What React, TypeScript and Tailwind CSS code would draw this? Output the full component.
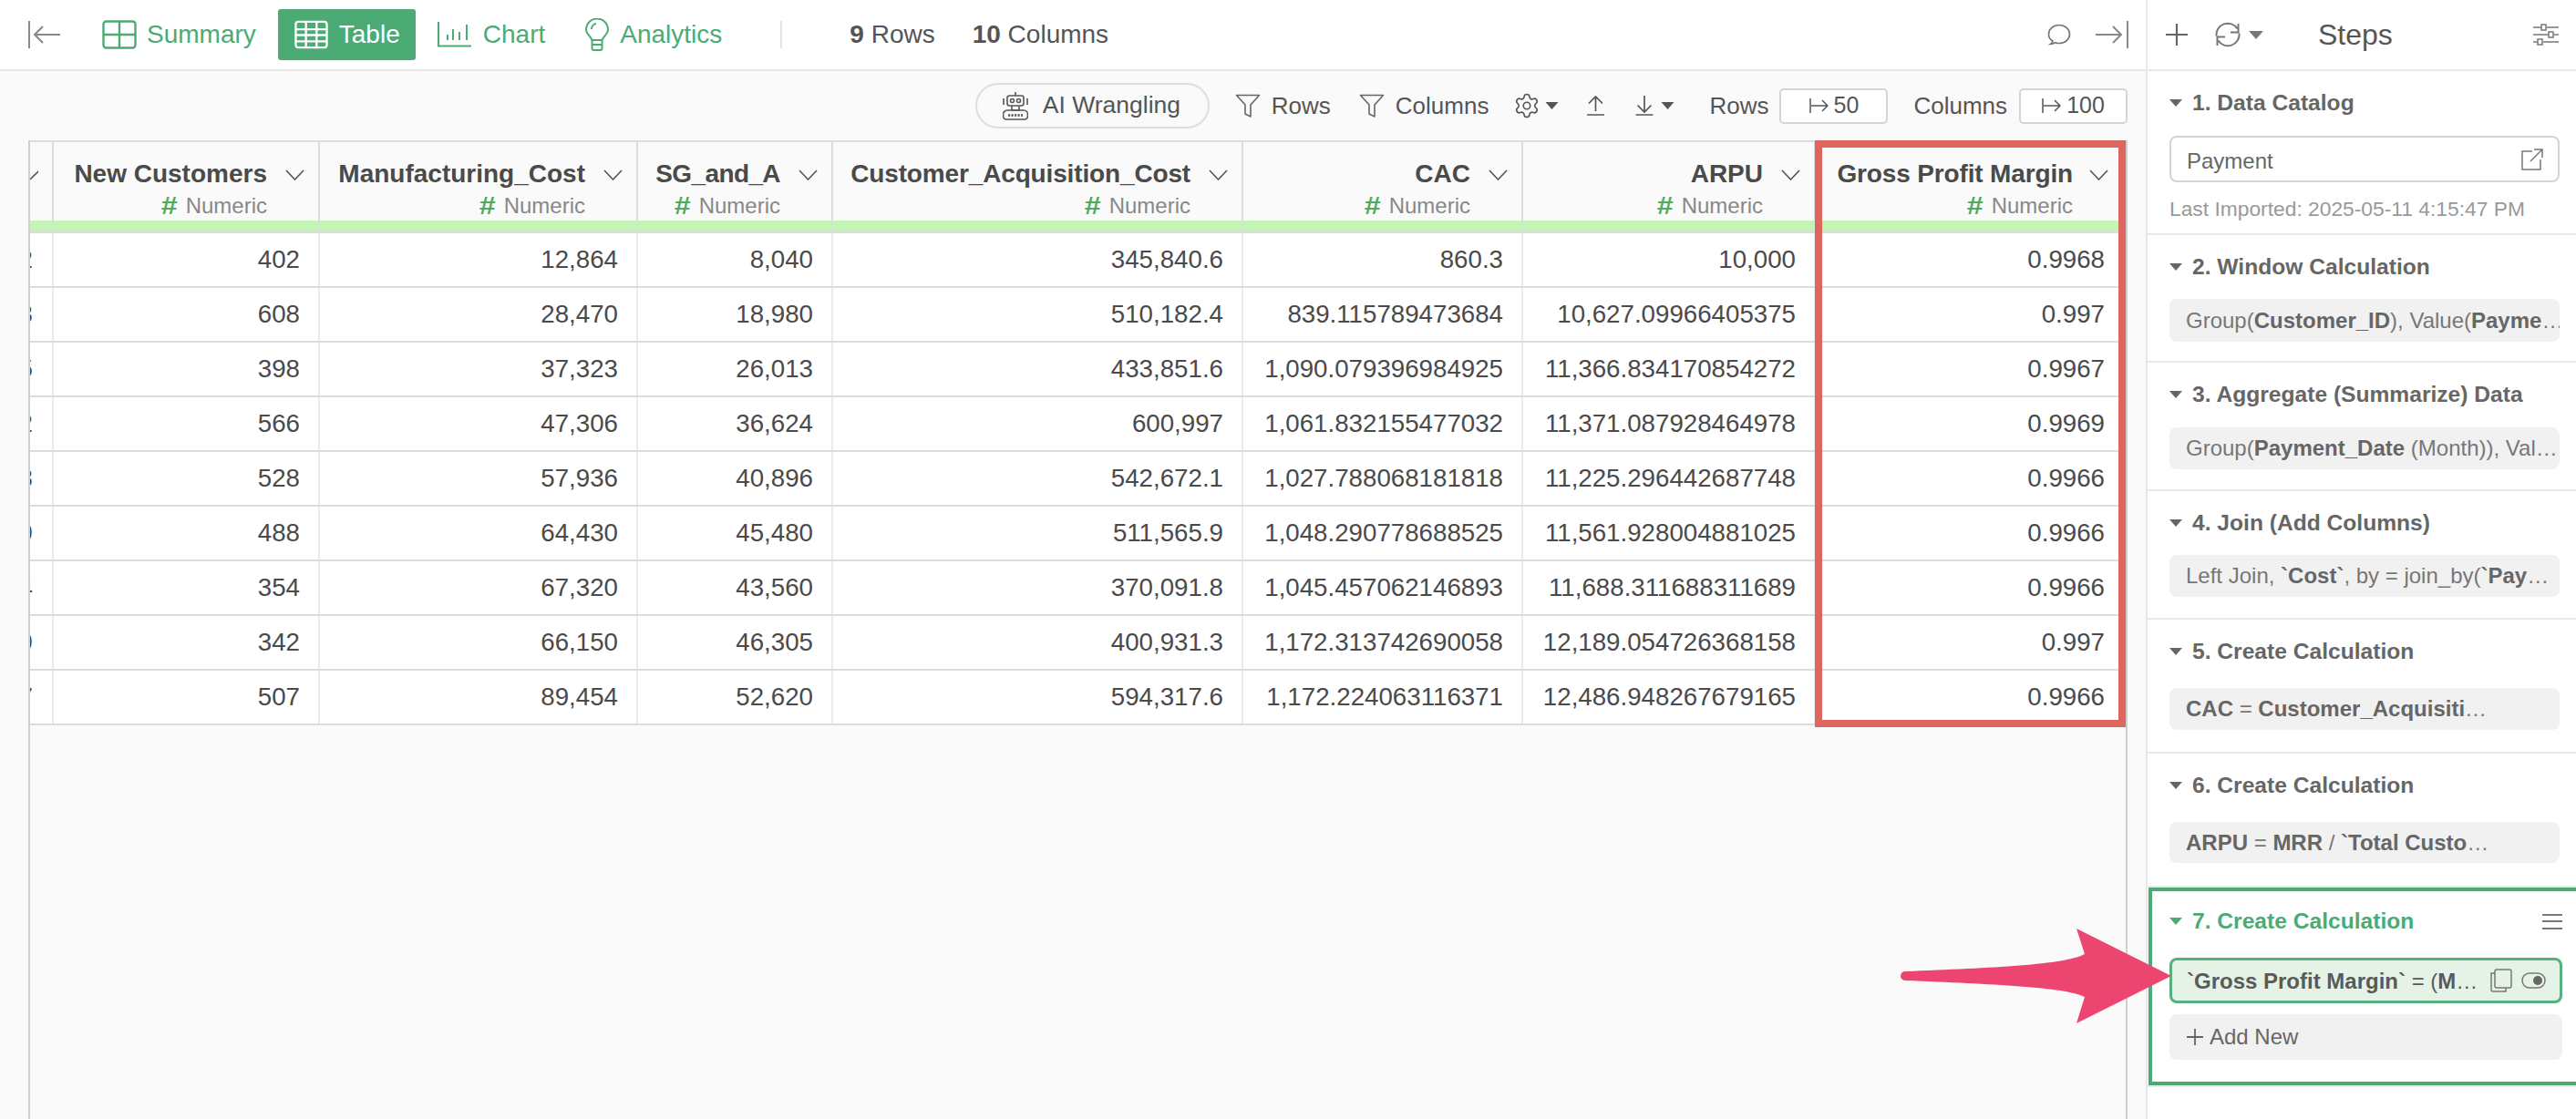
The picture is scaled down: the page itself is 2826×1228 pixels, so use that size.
import type { ReactNode } from "react";
import { Settings } from "lucide-react";

const columns = [
  { title: "New Customers", w: "w-[292px]", track: "" },
  { title: "Manufacturing_Cost", w: "w-[349px]", track: "" },
  { title: "SG_and_A", w: "w-[214px]", track: "tracking-[-0.6px]" },
  { title: "Customer_Acquisition_Cost", w: "w-[450px]", track: "tracking-[-0.15px]" },
  { title: "CAC", w: "w-[307px]", track: "" },
  { title: "ARPU", w: "w-[321px]", track: "" },
  { title: "Gross Profit Margin", w: "w-[340px]", track: "tracking-[-0.15px]" },
];

const rows = [
  ["2", "402", "12,864", "8,040", "345,840.6", "860.3", "10,000", "0.9968"],
  ["3", "608", "28,470", "18,980", "510,182.4", "839.115789473684", "10,627.09966405375", "0.997"],
  ["5", "398", "37,323", "26,013", "433,851.6", "1,090.079396984925", "11,366.834170854272", "0.9967"],
  ["2", "566", "47,306", "36,624", "600,997", "1,061.832155477032", "11,371.087928464978", "0.9969"],
  ["8", "528", "57,936", "40,896", "542,672.1", "1,027.788068181818", "11,225.296442687748", "0.9966"],
  ["9", "488", "64,430", "45,480", "511,565.9", "1,048.290778688525", "11,561.928004881025", "0.9966"],
  ["4", "354", "67,320", "43,560", "370,091.8", "1,045.457062146893", "11,688.311688311689", "0.9966"],
  ["9", "342", "66,150", "46,305", "400,931.3", "1,172.313742690058", "12,189.054726368158", "0.997"],
  ["7", "507", "89,454", "52,620", "594,317.6", "1,172.224063116371", "12,486.948267679165", "0.9966"],
];

function Chevron({ className }: { className?: string }) {
  return (
    <svg viewBox="0 0 21 12" className={className} fill="none" stroke="#555" strokeWidth="1.6">
      <path d="M1 1l9.5 10L20 1" />
    </svg>
  );
}

function Caret({ color = "#666", className = "w-[14px] h-[8px]" }: { color?: string; className?: string }) {
  return (
    <svg viewBox="0 0 14 8" className={className} fill={color}>
      <path d="M0 0h14L7 8z" />
    </svg>
  );
}

function Funnel() {
  return (
    <svg viewBox="0 0 28 26" className="w-[28px] h-[26px]" fill="none" stroke="#666" strokeWidth="1.6" strokeLinejoin="round">
      <path d="M1.500 1.500h25L17 12v13l-6-3V12z" />
    </svg>
  );
}

function ArrowBox({ label }: { label: string }) {
  return (
    <div className="w-[119px] h-[39px] flex items-center justify-center gap-[6px] bg-white border-2 border-[#d4d4d4] rounded-[5px] text-[25px] text-[#555]">
      <svg viewBox="0 0 21 16" className="w-[21px] h-[16px]" fill="none" stroke="#555" strokeWidth="1.5">
        <path d="M1 0v16M2 8h18M14 2l6 6-6 6" />
      </svg>
      {label}
    </div>
  );
}

function Section({ title, height, children }: { title: string; height: string; children: ReactNode }) {
  return (
    <div className={`${height} border-b-2 border-[#e8e8e8] pl-[24px] pr-[18px] pt-[18px]`}>
      <div className="h-[34px] flex items-center gap-[11px] text-[24.6px] font-bold text-[#666]">
        <Caret />
        {title}
      </div>
      {children}
    </div>
  );
}

function Chip({ className, children }: { className: string; children: ReactNode }) {
  return (
    <div className={`${className} flex items-center pl-[18px] bg-[#f1f1f1] rounded-[8px] text-[24px] text-[#777] whitespace-nowrap overflow-hidden [&_b]:text-[#666]`}>
      <span>{children}</span>
    </div>
  );
}

export default function App() {
  return (
    <div className="relative w-[2826px] h-[1228px] flex overflow-hidden bg-white font-['Liberation_Sans',Arial,sans-serif]">
      <div className="w-[2356px] h-full flex flex-col border-r-2 border-[#e8e8e8] bg-[#fafafa]">
        {/* top tabs */}
        <div className="h-[78px] shrink-0 flex items-center bg-white border-b-2 border-[#e8e8e8] pl-[31px] pr-[19px] text-[28px] text-[#4caa74]">
          <svg viewBox="0 0 36 30" className="w-[36px] h-[30px]" fill="none" stroke="#888" strokeWidth="2">
            <path d="M1 0v30M35 15H7M16 6l-9 9 9 9" />
          </svg>
          <div className="ml-[45px] flex items-center gap-[11px]">
            <svg viewBox="0 0 38 32" className="w-[38px] h-[32px]" fill="none" stroke="#4caa74" strokeWidth="2.4">
              <rect x="1.500" y="1.500" width="35" height="29" rx="3" />
              <path d="M1.500 16h35M19 1.500v29" />
            </svg>
            Summary
          </div>
          <div className="ml-[24px] w-[151px] h-[56px] flex items-center pl-[18px] gap-[12px] bg-[#4caa74] rounded-[3px] text-white">
            <svg viewBox="0 0 38 32" className="w-[37px] h-[32px]" fill="none" stroke="#fff" strokeWidth="2.4">
              <rect x="1.500" y="1.500" width="35" height="29" rx="3" />
              <path d="M1.500 10h35M1.500 16.500h35M1.500 23.500h35M13 1.500v29M25 1.500v29" />
            </svg>
            Table
          </div>
          <div className="ml-[24px] flex items-center gap-[12px]">
            <svg viewBox="0 0 38 28" className="w-[38px] h-[28px]" fill="none" stroke="#4caa74" strokeWidth="2">
              <path d="M1 0v26.500h36M11 14v6M17 8v12M24 11v9M32 3v17" />
            </svg>
            Chart
          </div>
          <div className="ml-[44px] flex items-center gap-[12px]">
            <svg viewBox="0 0 26 36" className="w-[26px] h-[36px]" fill="none" stroke="#4caa74" strokeWidth="2">
              <path d="M7.500 24C6 20 1 17 1 12.500a12 12 0 0 1 24 0C25 17 20 20 18.500 24z" />
              <path d="M7.500 24v9a2 2 0 0 0 2 2h7a2 2 0 0 0 2-2v-9M7.500 29h11M7 12a6 6 0 0 1 5-6" />
            </svg>
            Analytics
          </div>
          <div className="ml-[64px] w-[2px] h-[30px] bg-[#e4e4e4]" />
          <div className="ml-[74px] text-[28px] text-[#555]">
            <b>9</b> Rows
          </div>
          <div className="ml-[41px] text-[28px] text-[#555]">
            <b>10</b> Columns
          </div>
          <div className="flex-1" />
          <svg viewBox="0 0 26 24" className="w-[26px] h-[24px]" fill="none" stroke="#777" strokeWidth="1.700">
            <path d="M6 19C3 17.500 1.500 15 1.500 11.500 1.500 6 6.500 1.500 13 1.500s11.500 4.500 11.500 10S19.500 21.500 13 21.500c-1.500 0-3-.2-4.500-.8-1.300 1.200-3 1.800-5 1.800 1.300-.8 2.100-2 2.500-3.500z" />
          </svg>
          <svg viewBox="0 0 36 30" className="ml-[27px] w-[36px] h-[30px]" fill="none" stroke="#888" strokeWidth="2">
            <path d="M35 0v30M0 15h28M19 6l9 9-9 9" />
          </svg>
        </div>

        {/* table toolbar */}
        <div className="h-[76px] shrink-0 flex items-center justify-end pr-[20px] text-[26px] text-[#555]">
          <div className="w-[257px] h-[50px] flex items-center pl-[28px] gap-[16px] border-2 border-[#dedede] rounded-full text-[26.500px]">
            <svg viewBox="0 0 28 31" className="w-[28px] h-[31px]" fill="none" stroke="#555" strokeWidth="1.600">
              <path d="M14 0v4M1 7v7M27 7v7M10 15v5h8v-5" />
              <rect x="5" y="4" width="18" height="11" rx="2.500" />
              <circle cx="10.500" cy="9.500" r="2" />
              <circle cx="17.500" cy="9.500" r="2" />
              <path d="M5 20h18a4.500 4.500 0 0 1 4.500 4.500v2A3.500 3.500 0 0 1 24 30H4A3.500 3.500 0 0 1 .5 26.500v-2A4.500 4.500 0 0 1 5 20z" />
              <path d="M6 25.500h16" strokeWidth="2.600" strokeDasharray="2.200 1.300" />
            </svg>
            AI Wrangling
          </div>
          <div className="ml-[28px] flex items-center gap-[12px]">
            <Funnel />
            Rows
          </div>
          <div className="ml-[31px] flex items-center gap-[12px]">
            <Funnel />
            Columns
          </div>
          <Settings className="ml-[27px] w-[30px] h-[30px] text-[#555]" strokeWidth={1.300} />
          <Caret color="#555" className="ml-[5px] w-[15px] h-[8px]" />
          <svg viewBox="0 0 19 22" className="ml-[31px] w-[19px] h-[22px]" fill="none" stroke="#555" strokeWidth="1.700">
            <path d="M9.500 17V1M2 8.500l7.500-7.500L17 8.500M0 21h19" />
          </svg>
          <svg viewBox="0 0 19 22" className="ml-[34px] w-[20px] h-[22px]" fill="none" stroke="#555" strokeWidth="1.700">
            <path d="M9.500 0v18M2 10.500l7.500 7.500 7.500-7.500M0 21h19" />
          </svg>
          <Caret color="#555" className="ml-[8px] w-[15px] h-[8px]" />
          <span className="ml-[38px]">Rows</span>
          <div className="ml-[12px]">
            <ArrowBox label="50" />
          </div>
          <span className="ml-[28px]">Columns</span>
          <div className="ml-[13px]">
            <ArrowBox label="100" />
          </div>
        </div>

        {/* table */}
        <div className="relative flex-1 ml-[31px] w-[2303px] border-x-2 border-[#cfcfcf] overflow-hidden">
          <div className="h-[2px] bg-[#dcdcdc]" />
          <div className="flex h-[86px]">
            <div className="w-[26px] shrink-0 border-r-2 border-[#dcdcdc] overflow-hidden pt-[31px]">
              <svg viewBox="0 0 9 12" className="w-[9px] h-[12px]" fill="none" stroke="#555" strokeWidth="1.600">
                <path d="M0 10l9-9" />
              </svg>
            </div>
            {columns.map((c) => (
              <div key={c.title} className={`${c.w} group shrink-0 border-r-2 border-[#dcdcdc] last:border-r-0 pt-[18px] flex flex-col`}>
                <div className={`${c.track} h-[34px] flex items-center justify-end gap-[20px] group-last:gap-[18px] pr-[15px] group-last:pr-[19px] text-[28px] font-bold text-[#4a4a4a] whitespace-nowrap`}>
                  {c.title}
                  <Chevron className="w-[21px] h-[12px] mt-[2px]" />
                </div>
                <div className="mt-[3px] h-[30px] flex items-center justify-end gap-[10px] pr-[56px] group-last:pr-[58px] text-[24px] text-[#888]">
                  <span className="inline-block scale-x-[1.15] text-[28px] font-bold text-[#52ab5c]">#</span>
                  Numeric
                </div>
              </div>
            ))}
          </div>
          <div className="flex h-[12px] bg-[#c4f5b6]">
            <div className="w-[26px] border-r-2 border-[#dcdcdc]/50" />
            {columns.map((c) => (
              <div key={c.title} className={`${c.w} border-r-2 border-[#dcdcdc]/50 last:border-r-0`} />
            ))}
          </div>
          <div className="h-[2px] bg-[#dcdcdc]" />
          <div className="bg-white">
            {rows.map((r, i) => (
              <div key={i} className="flex h-[60px] border-b-2 border-[#dcdcdc] text-[27.700px] text-[#4a4a4a]">
                <div className="w-[26px] shrink-0 flex items-center justify-end overflow-hidden border-r-2 border-[#ececec] pr-[21px]">
                  <span>{r[0]}</span>
                </div>
                {columns.map((c, j) => (
                  <div key={c.title} className={`${c.w} shrink-0 flex items-center justify-end whitespace-nowrap border-r-2 border-[#ececec] last:border-r-0 pr-[20px] last:pr-[23px]`}>
                    {r[j + 1]}
                  </div>
                ))}
              </div>
            ))}
          </div>
          {/* highlight around the last column */}
          <div className="absolute left-[1958px] top-0 w-[341px] h-[644px] border-[8px] border-[#dd665e]" />
        </div>
      </div>

      {/* steps panel */}
      <div className="w-[470px] h-full flex flex-col">
        <div className="h-[78px] shrink-0 flex items-center border-b-2 border-[#e8e8e8] pl-[20px] pr-[19px] text-[#666]">
          <svg viewBox="0 0 24 24" className="w-[24px] h-[24px]" fill="none" stroke="#666" strokeWidth="2.200">
            <path d="M12 0v24M0 12h24" />
          </svg>
          <svg viewBox="0 0 28 28" className="ml-[30px] w-[28px] h-[28px]" fill="none" stroke="#777" strokeWidth="2">
            <path d="M1.500 15.500A12.500 12.500 0 0 1 24.500 7.500M25.500 2v9.500H17M26.500 12.500A12.500 12.500 0 0 1 3.500 20.500M2.500 26v-9.500H11" />
          </svg>
          <Caret color="#777" className="ml-[9px] w-[16px] h-[9px]" />
          <span className="ml-[60px] text-[32px] text-[#555]">Steps</span>
          <div className="flex-1" />
          <svg viewBox="0 0 28 24" className="w-[28px] h-[24px]" fill="none" stroke="#777" strokeWidth="1.500">
            <path d="M0 4h9M15 4h13M0 12h17M23 12h5M0 20h5M11 20h17" />
            <rect x="9" y="1" width="5" height="6" />
            <rect x="17" y="9" width="5" height="6" />
            <rect x="5" y="17" width="5" height="6" />
          </svg>
        </div>

        <Section title="1. Data Catalog" height="h-[180px]">
          <div className="mt-[19px] h-[51px] flex items-center justify-between pl-[17px] pr-[16px] border-2 border-[#d4d4d4] rounded-[8px] text-[24px] text-[#666]">
            <span className="pt-[5px]">Payment</span>
            <svg viewBox="0 0 24 24" className="w-[24px] h-[24px]" fill="none" stroke="#777" strokeWidth="1.500">
              <path d="M12 3H1v20h20V12M10 14L23 1M14 1h9v9" />
            </svg>
          </div>
          <div className="mt-[15px] text-[22.800px] leading-[28px] text-[#999] whitespace-nowrap">Last Imported: 2025-05-11 4:15:47 PM</div>
        </Section>
        <Section title="2. Window Calculation" height="h-[140px]">
          <Chip className="mt-[18px] h-[47px]">
            Group(<b>Customer_ID</b>), Value(<b>Payme</b>…
          </Chip>
        </Section>
        <Section title="3. Aggregate (Summarize) Data" height="h-[141px]">
          <Chip className="mt-[19px] h-[46px]">
            Group(<b>Payment_Date</b> (Month)), Val…
          </Chip>
        </Section>
        <Section title="4. Join (Add Columns)" height="h-[141px]">
          <Chip className="mt-[18px] h-[46px]">
            Left Join, <b>`Cost`</b>, by = join_by(<b>`Pay</b>…
          </Chip>
        </Section>
        <Section title="5. Create Calculation" height="h-[147px]">
          <Chip className="mt-[23px] h-[46px]">
            <b>CAC</b> = <b>Customer_Acquisiti</b>…
          </Chip>
        </Section>
        <Section title="6. Create Calculation" height="h-[147px]">
          <Chip className="mt-[23px] h-[45px]">
            <b>ARPU</b> = <b>MRR</b> / <b>`Total Custo</b>…
          </Chip>
        </Section>

        <div className="ml-[1px] h-[217px] border-[4px] border-r-0 border-[#4caa74] pl-[19px] pr-[15px] pt-[16px]">
          <div className="h-[34px] flex items-center gap-[11px] text-[24.600px] font-bold text-[#4caa74]">
            <Caret color="#4caa74" />
            7. Create Calculation
            <div className="flex-1" />
            <div className="flex flex-col gap-[5.500px]">
              <div className="w-[22px] h-[2px] bg-[#777]" />
              <div className="w-[22px] h-[2px] bg-[#777]" />
              <div className="w-[22px] h-[2px] bg-[#777]" />
            </div>
          </div>
          <div className="mt-[23px] h-[50px] flex items-center pl-[16px] pr-[15px] bg-[#e5f3e6] border-[3px] border-[#57b07f] rounded-[8px] text-[24px] text-[#5a5a5a] whitespace-nowrap">
            <span className="pt-[2px]">
              <b>`Gross Profit Margin`</b> = (<b>M</b>…
            </span>
            <div className="flex-1" />
            <svg viewBox="0 0 24 26" className="w-[24px] h-[26px]" fill="none" stroke="#777" strokeWidth="1.500">
              <rect x="5" y="1" width="18" height="20" rx="2" />
              <path d="M5 5H1v18a2 2 0 0 0 2 2h14v-4" />
            </svg>
            <svg viewBox="0 0 27 18" className="ml-[10px] w-[27px] h-[18px]" fill="none" stroke="#777" strokeWidth="1.500">
              <rect x="1" y="1" width="25" height="16" rx="8" />
              <circle cx="18" cy="9" r="5" fill="#666" stroke="none" />
            </svg>
          </div>
          <div className="mt-[12px] h-[50px] flex items-center gap-[7px] pl-[19px] bg-[#f1f1f1] rounded-[8px] text-[24px] text-[#666]">
            <svg viewBox="0 0 18 18" className="w-[18px] h-[18px]" fill="none" stroke="#666" strokeWidth="1.800">
              <path d="M9 0v18M0 9h18" />
            </svg>
            Add New
          </div>
        </div>
        <div className="h-[2px] bg-[#e8e8e8]" />
      </div>

      {/* callout arrow */}
      <svg viewBox="0 0 297 104" className="absolute left-[2085px] top-[1019px] w-[297px] h-[104px]" fill="#ec4670">
        <path d="M5 47C100 43 180 40 202 28L193 0L297 52L193 104L202 75C180 64 100 61 5 57A5 5 0 0 1 5 47Z" />
      </svg>
    </div>
  );
}
